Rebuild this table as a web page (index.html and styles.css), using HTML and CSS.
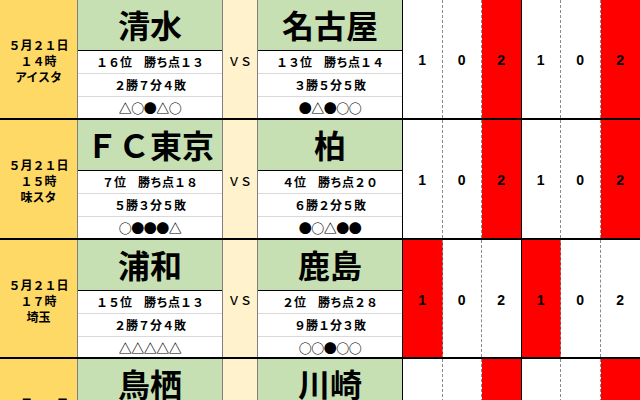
FILE: index.html
```html
<!DOCTYPE html>
<html lang="ja">
<head>
<meta charset="utf-8">
<link rel="stylesheet" href="styles.css">
</head>
<body>
<div class="sheet">
  <div class="match m1">
    <div class="date"><span>５月２１日</span><span>１４時</span><span>アイスタ</span></div>
    <div class="team">
      <div class="name">清水</div>
      <div class="info">１６位　勝ち点１３</div>
      <div class="info">２勝７分４敗</div>
      <div class="info form">△○●△○</div>
    </div>
    <div class="vs">ＶＳ</div>
    <div class="team team2">
      <div class="name">名古屋</div>
      <div class="info">１３位　勝ち点１４</div>
      <div class="info">３勝５分５敗</div>
      <div class="info form">●△●○○</div>
    </div>
    <div class="score">1</div>
    <div class="score">0</div>
    <div class="score red group-end">2</div>
    <div class="score">1</div>
    <div class="score">0</div>
    <div class="score red last">2</div>
  </div>
  <div class="match m2">
    <div class="date"><span>５月２１日</span><span>１５時</span><span>味スタ</span></div>
    <div class="team">
      <div class="name">ＦＣ東京</div>
      <div class="info">７位　勝ち点１８</div>
      <div class="info">５勝３分５敗</div>
      <div class="info form">○●●●△</div>
    </div>
    <div class="vs">ＶＳ</div>
    <div class="team team2">
      <div class="name">柏</div>
      <div class="info">４位　勝ち点２０</div>
      <div class="info">６勝２分５敗</div>
      <div class="info form">●○△●●</div>
    </div>
    <div class="score">1</div>
    <div class="score">0</div>
    <div class="score red group-end">2</div>
    <div class="score">1</div>
    <div class="score">0</div>
    <div class="score red last">2</div>
  </div>
  <div class="match m3">
    <div class="date"><span>５月２１日</span><span>１７時</span><span>埼玉</span></div>
    <div class="team">
      <div class="name">浦和</div>
      <div class="info">１５位　勝ち点１３</div>
      <div class="info">２勝７分４敗</div>
      <div class="info form">△△△△△</div>
    </div>
    <div class="vs">ＶＳ</div>
    <div class="team team2">
      <div class="name">鹿島</div>
      <div class="info">２位　勝ち点２８</div>
      <div class="info">９勝１分３敗</div>
      <div class="info form">○○●○○</div>
    </div>
    <div class="score red">1</div>
    <div class="score">0</div>
    <div class="score group-end">2</div>
    <div class="score red">1</div>
    <div class="score">0</div>
    <div class="score last">2</div>
  </div>
  <div class="match m4">
    <div class="date"><span>５月２１日</span><span>１９時</span><span>等々力</span></div>
    <div class="team">
      <div class="name">鳥栖</div>
      <div class="info">１１位　勝ち点１５</div>
      <div class="info">３勝６分４敗</div>
      <div class="info form">○△●△△</div>
    </div>
    <div class="vs">ＶＳ</div>
    <div class="team team2">
      <div class="name">川崎</div>
      <div class="info">３位　勝ち点２６</div>
      <div class="info">８勝２分３敗</div>
      <div class="info form">○○△●○</div>
    </div>
    <div class="score">1</div>
    <div class="score">0</div>
    <div class="score red group-end">2</div>
    <div class="score">1</div>
    <div class="score">0</div>
    <div class="score red last">2</div>
  </div>
</div>
</body>
</html>
```
FILE: styles.css
```css
html, body {
  margin: 0;
  padding: 0;
  background: #fff;
  overflow: hidden;
}
.sheet {
  width: 640px;
  height: 400px;
  overflow: hidden;
  font-family: "Noto Sans CJK JP", "Liberation Sans", sans-serif;
  color: #000;
}
.match {
  display: grid;
  grid-template-columns: 78px 145px 35px 145px repeat(6, 1fr);
  box-sizing: border-box;
  height: 120px;
  border-bottom: 2px solid #000;
}
.m3 { height: 119px; }
.date {
  background: #ffd966;
  border-right: 1px solid #7f7f7f;
  display: flex;
  flex-direction: column;
  justify-content: center;
  align-items: center;
  font-size: 12px;
  font-weight: 700;
  line-height: 16px;
  padding-top: 4px;
}
.team {
  display: grid;
  grid-template-rows: 51px 23px 23px 1fr;
  border-right: 1px solid #7f7f7f;
  min-height: 0;
}
.team2 {
  border-right: 1px solid #000;
}
.name {
  background: #c6e0b4;
  border-bottom: 1px solid #000;
  display: flex;
  align-items: center;
  justify-content: center;
  font-size: 32px;
  font-weight: 700;
  line-height: 1;
  padding-bottom: 2px;
}
.info {
  display: flex;
  align-items: center;
  justify-content: center;
  font-size: 12px;
  font-weight: 700;
  line-height: 1;
  border-bottom: 1px solid #d9d9d9;
}
.info.form {
  font-size: 13px;
  letter-spacing: -0.5px;
}
.info:last-child {
  border-bottom: none;
}
.vs {
  background: #fff2cc;
  border-right: 1px solid #7f7f7f;
  display: flex;
  align-items: center;
  justify-content: center;
  font-size: 12px;
  font-weight: 500;
  padding-top: 2px;
}
.score {
  display: flex;
  align-items: center;
  justify-content: center;
  font-family: "Liberation Sans", sans-serif;
  font-weight: 700;
  font-size: 14px;
  border-right: 1px dashed #8a8a8a;
  padding-top: 2px;
}
.score.group-end {
  border-right: 1px solid #000;
}
.score.last {
  border-right: none;
}
.red {
  background: #ff0000;
}
```
